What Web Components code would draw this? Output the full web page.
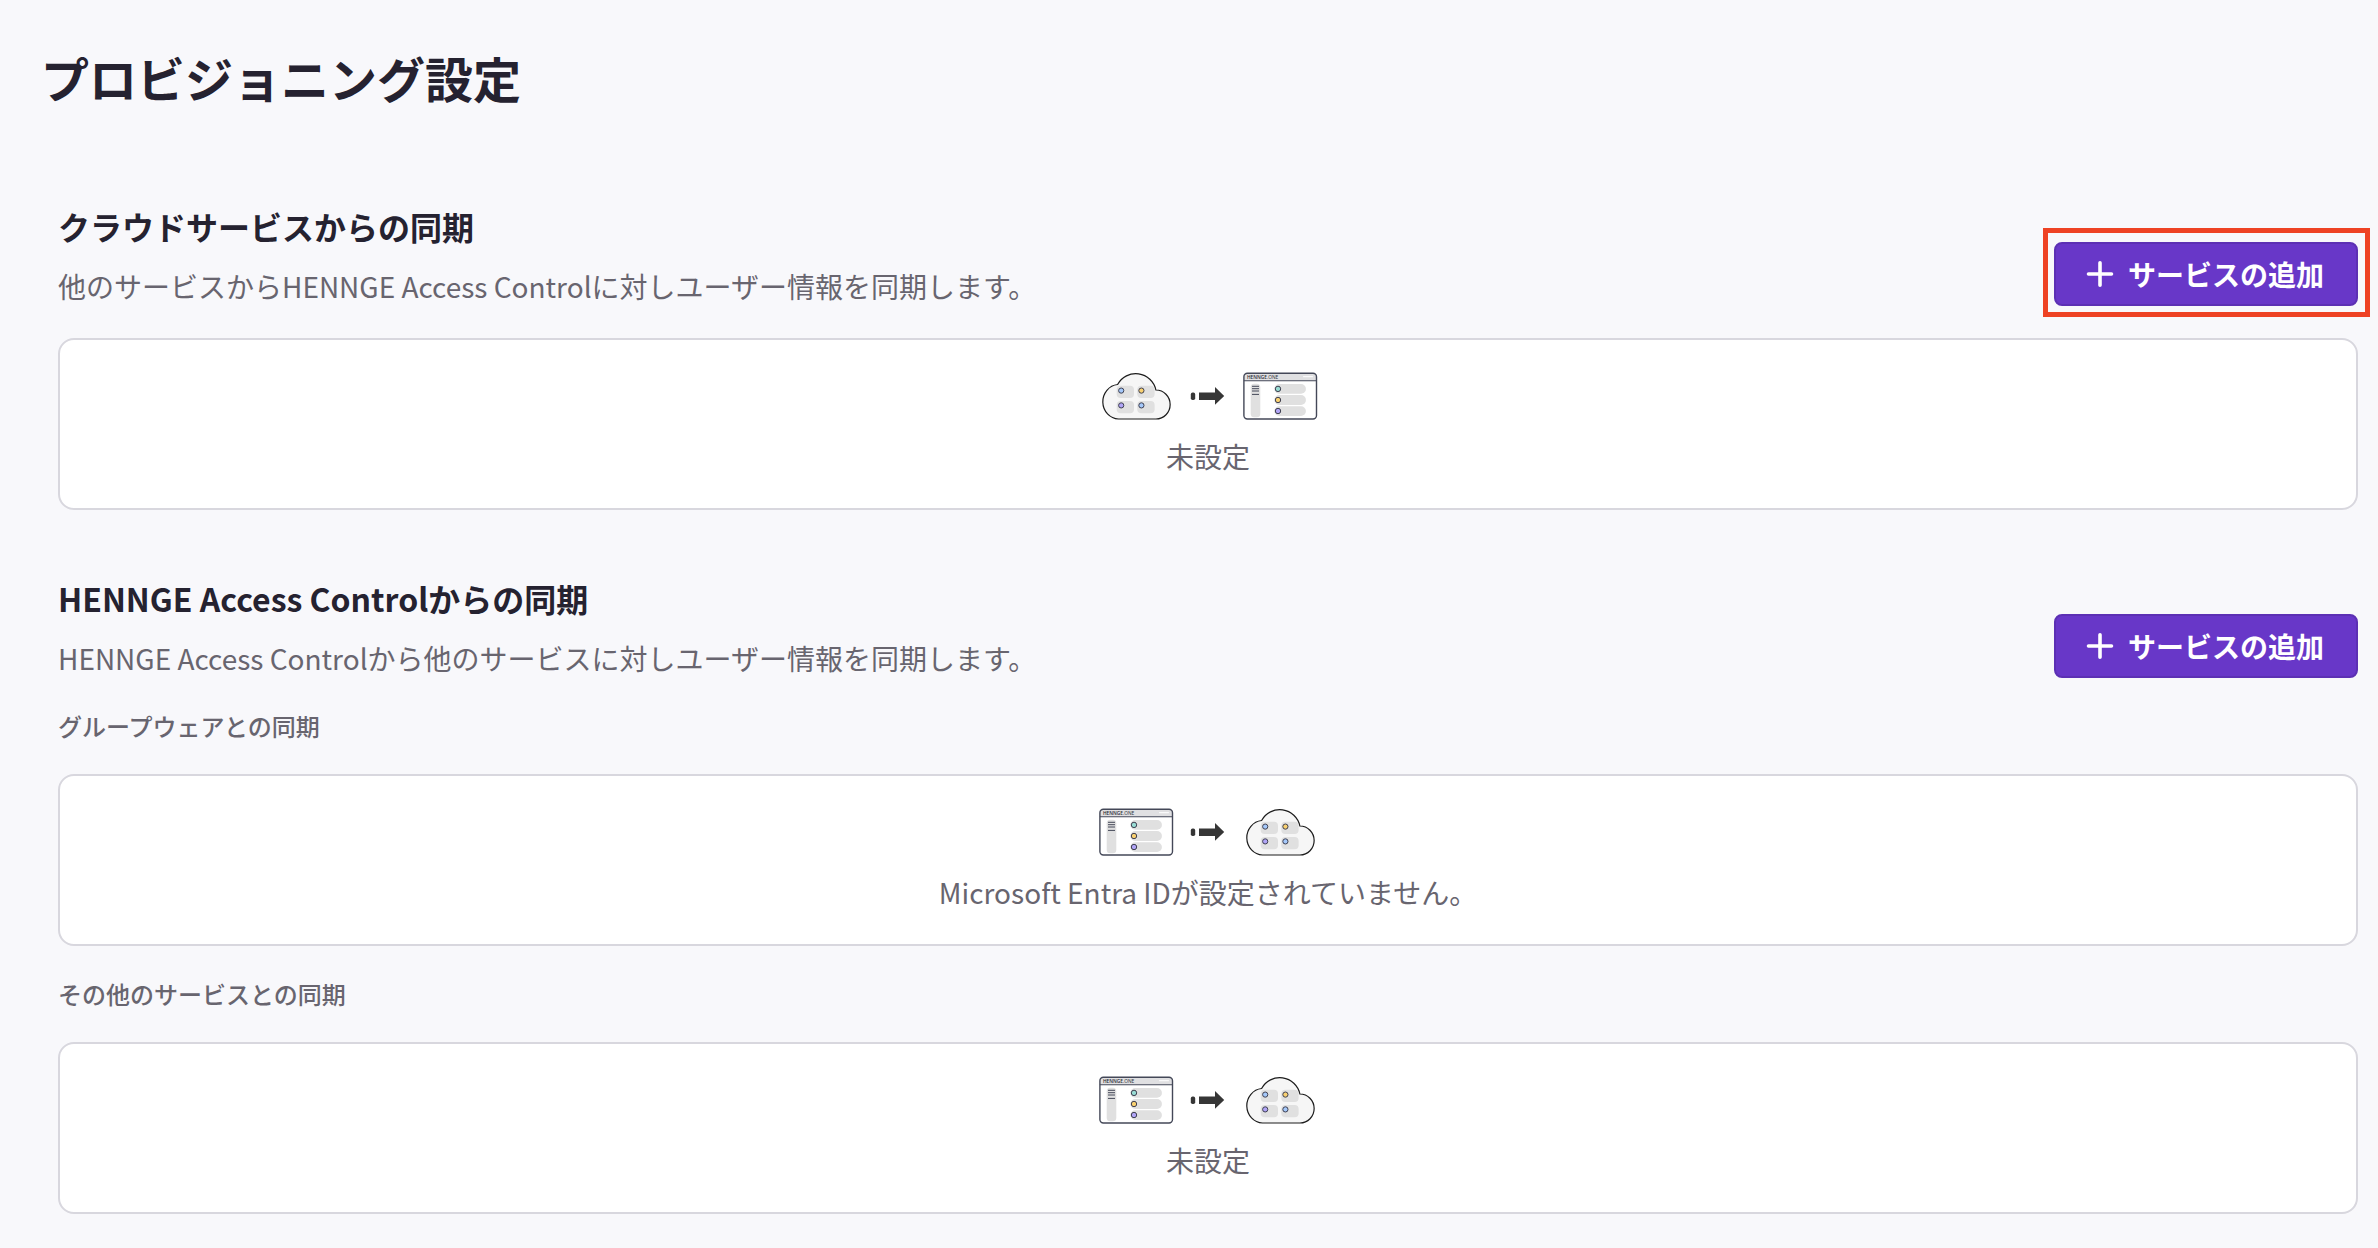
<!DOCTYPE html>
<html lang="ja">
<head>
<meta charset="UTF-8">
<meta name="viewport" content="width=device-width, initial-scale=1">
<title>プロビジョニング設定</title>
<style>
    body {
        margin: 0;
        background: #f8f8fb;
        color: #252230;
        font-family: "Noto Sans CJK JP", sans-serif;
    }
</style>
</head>
<body>
<provisioning-page></provisioning-page>

<script>
// Cloud holding four service tiles
const cloudIcon = `
    <svg width="76" height="48" viewBox="0 0 76 48" aria-hidden="true">
        <path d="M20.5 47A16.4 17.3 0 0 1 19.6 12.5A20.6 20.6 0 0 1 57.9 18A14.2 14.5 0 0 1 58 47Z" fill="#f6f6f6" stroke="#1c1c1c" stroke-width="1.2"/>
        <g fill="#e0e0e0">
            <rect x="18.7" y="13.7" width="17.3" height="12.3" rx="4"/>
            <rect x="39.3" y="13.7" width="17.3" height="12.3" rx="4"/>
            <rect x="18.7" y="29" width="17.3" height="12.3" rx="4"/>
            <rect x="39.3" y="29" width="17.3" height="12.3" rx="4"/>
        </g>
        <g stroke="#3f4050" stroke-width="1">
            <circle cx="23.2" cy="18.6" r="2.6" fill="#a4c8fa"/>
            <circle cx="43.4" cy="18.6" r="2.6" fill="#f8d070"/>
            <circle cx="23.2" cy="33.4" r="2.6" fill="#b0a4f6"/>
            <circle cx="43.4" cy="33.4" r="2.6" fill="#a4c8fa"/>
        </g>
    </svg>`;

// Browser window with a user list
const windowIcon = `
    <svg width="76" height="48" viewBox="0 0 76 48" aria-hidden="true">
        <rect x="1.9" y="1.2" width="72.6" height="45.8" rx="3.5" fill="#fff"/>
        <path d="M1.9 8.7V4.7a3.5 3.5 0 0 1 3.5-3.5h65.6a3.5 3.5 0 0 1 3.5 3.5v4Z" fill="#e0e0e2"/>
        <path d="M1.9 8.7h72.6" stroke="#444858" stroke-width="1.1"/>
        <rect x="1.9" y="1.2" width="72.6" height="45.8" rx="3.5" fill="none" stroke="#444858" stroke-width="1.4"/>
        <text x="5" y="6.8" font-family="'Open Sans', sans-serif" font-size="4.8" fill="#2a2a34"><tspan font-weight="600">HENNGE</tspan>.ONE</text>
        <path d="M61.5 4.7h9" stroke="#fff" stroke-width="1" stroke-linecap="round"/>
        <rect x="8.7" y="11.7" width="9.6" height="33.6" rx="3.5" fill="#e0e0e0"/>
        <path d="M10 14.3h7M10 16.7h7M10 19h7M10 22.4h7" stroke="#444858" stroke-width="1"/>
        <g fill="#e0e0e0">
            <rect x="32.3" y="12" width="31.6" height="9.8" rx="4.9"/>
            <rect x="32.3" y="23.1" width="31.6" height="9.8" rx="4.9"/>
            <rect x="32.3" y="34.2" width="31.6" height="9.8" rx="4.9"/>
        </g>
        <g stroke="#3f4050" stroke-width="1">
            <circle cx="36" cy="16.9" r="2.7" fill="#98dcd4"/>
            <circle cx="36" cy="28" r="2.7" fill="#f8d070"/>
            <circle cx="36" cy="39" r="2.7" fill="#b0a4f6"/>
        </g>
    </svg>`;

const arrowIcon = `
    <svg width="36" height="48" viewBox="0 0 36 48" aria-hidden="true">
        <rect x="0.8" y="20.6" width="4.4" height="7.4" rx="1.8" fill="#363636"/>
        <path d="M9 20.4h16V15l9.2 9-9.2 8.8V28H9Z" fill="#363636"/>
    </svg>`;

class AddButton extends HTMLElement {
    constructor() {
        super();
        this.attachShadow({ mode: 'open' });
        this.shadowRoot.innerHTML = `
        <style>
        :host {
            display: block;
            position: relative;
            flex: none;
        }

        button {
            display: flex;
            align-items: center;
            gap: 12px;
            height: 64px;
            padding: 0 32px;
            border: 2px solid #5c30b4;
            border-radius: 8px;
            background: #6837c8;
            color: #fff;
            font: 700 28px/40px "Noto Sans CJK JP", sans-serif;
            cursor: pointer;
        }

        button:hover {
            background: #5c30b4;
        }

        svg {
            overflow: visible;
        }

        /* Frame drawn round the button to point it out */
        :host([highlighted])::after {
            content: "";
            position: absolute;
            inset: -14px -12px -11px -11px;
            border: 5px solid #ee4224;
            pointer-events: none;
        }
        </style>

        <button type="button">
            <svg width="28" height="28" viewBox="0 0 28 28" aria-hidden="true">
                <path d="M12 2.8v22.4M.5 14h23" stroke="#fff" stroke-width="3.6" stroke-linecap="round"/>
            </svg>
            <slot></slot>
        </button>
        `;
    }
}

class SyncCard extends HTMLElement {
    constructor() {
        super();
        this.attachShadow({ mode: 'open' });
    }

    connectedCallback() {
        const inbound = this.getAttribute('direction') === 'in';
        this.shadowRoot.innerHTML = `
        <style>
        :host {
            display: flex;
            flex-direction: column;
            align-items: center;
            gap: 16px;
            padding: 32px;
            border: 2px solid #d8d7de;
            border-radius: 16px;
            background: #fff;
            color: #68656f;
            font-size: 28px;
            line-height: 40px;
        }

        .flow {
            display: flex;
            gap: 16px;
        }

        svg {
            display: block;
        }

        p {
            margin: 0;
        }
        </style>

        <div class="flow">
            ${inbound ? cloudIcon : windowIcon}
            ${arrowIcon}
            ${inbound ? windowIcon : cloudIcon}
        </div>
        <p><slot></slot></p>
        `;
    }
}

class SyncSection extends HTMLElement {
    constructor() {
        super();
        this.attachShadow({ mode: 'open' });
        this.shadowRoot.innerHTML = `
        <style>
        :host {
            display: flex;
            flex-direction: column;
            gap: 32px;
        }

        header {
            display: flex;
            justify-content: space-between;
            align-items: flex-end;
            gap: 32px;
        }

        .text {
            display: flex;
            flex-direction: column;
            gap: 16px;
        }

        ::slotted(h2) {
            margin: 0;
            font-size: 32px;
            line-height: 48px;
            font-weight: 700;
        }

        ::slotted(p) {
            margin: 0;
            color: #68656f;
            font-size: 28px;
            line-height: 40px;
        }

        ::slotted(h3) {
            margin: 0;
            color: #68656f;
            font-size: 24px;
            line-height: 32px;
            font-weight: 500;
        }
        </style>

        <header>
            <div class="text">
                <slot name="title"></slot>
                <slot name="description"></slot>
            </div>
            <slot name="action"></slot>
        </header>
        <slot></slot>
        `;
    }
}

class ProvisioningPage extends HTMLElement {
    constructor() {
        super();
        this.attachShadow({ mode: 'open' });
        this.shadowRoot.innerHTML = `
        <style>
        :host {
            display: block;
            padding: 41px 20px 32px 41px;
        }

        h1 {
            margin: 0 0 89px;
            font-size: 48px;
            line-height: 72px;
            font-weight: 700;
        }

        main {
            display: flex;
            flex-direction: column;
            gap: 64px;
            padding-left: 17px;
        }
        </style>

        <h1>プロビジョニング設定</h1>
        <main>
            <sync-section>
                <h2 slot="title">クラウドサービスからの同期</h2>
                <p slot="description">他のサービスからHENNGE Access Controlに対しユーザー情報を同期します。</p>
                <add-button slot="action" highlighted>サービスの追加</add-button>
                <sync-card direction="in">未設定</sync-card>
            </sync-section>
            <sync-section>
                <h2 slot="title">HENNGE Access Controlからの同期</h2>
                <p slot="description">HENNGE Access Controlから他のサービスに対しユーザー情報を同期します。</p>
                <add-button slot="action">サービスの追加</add-button>
                <h3>グループウェアとの同期</h3>
                <sync-card direction="out">Microsoft Entra IDが設定されていません。</sync-card>
                <h3>その他のサービスとの同期</h3>
                <sync-card direction="out">未設定</sync-card>
            </sync-section>
        </main>
        `;
    }
}

customElements.define('add-button', AddButton);
customElements.define('sync-card', SyncCard);
customElements.define('sync-section', SyncSection);
customElements.define('provisioning-page', ProvisioningPage);
</script>
</body>
</html>
